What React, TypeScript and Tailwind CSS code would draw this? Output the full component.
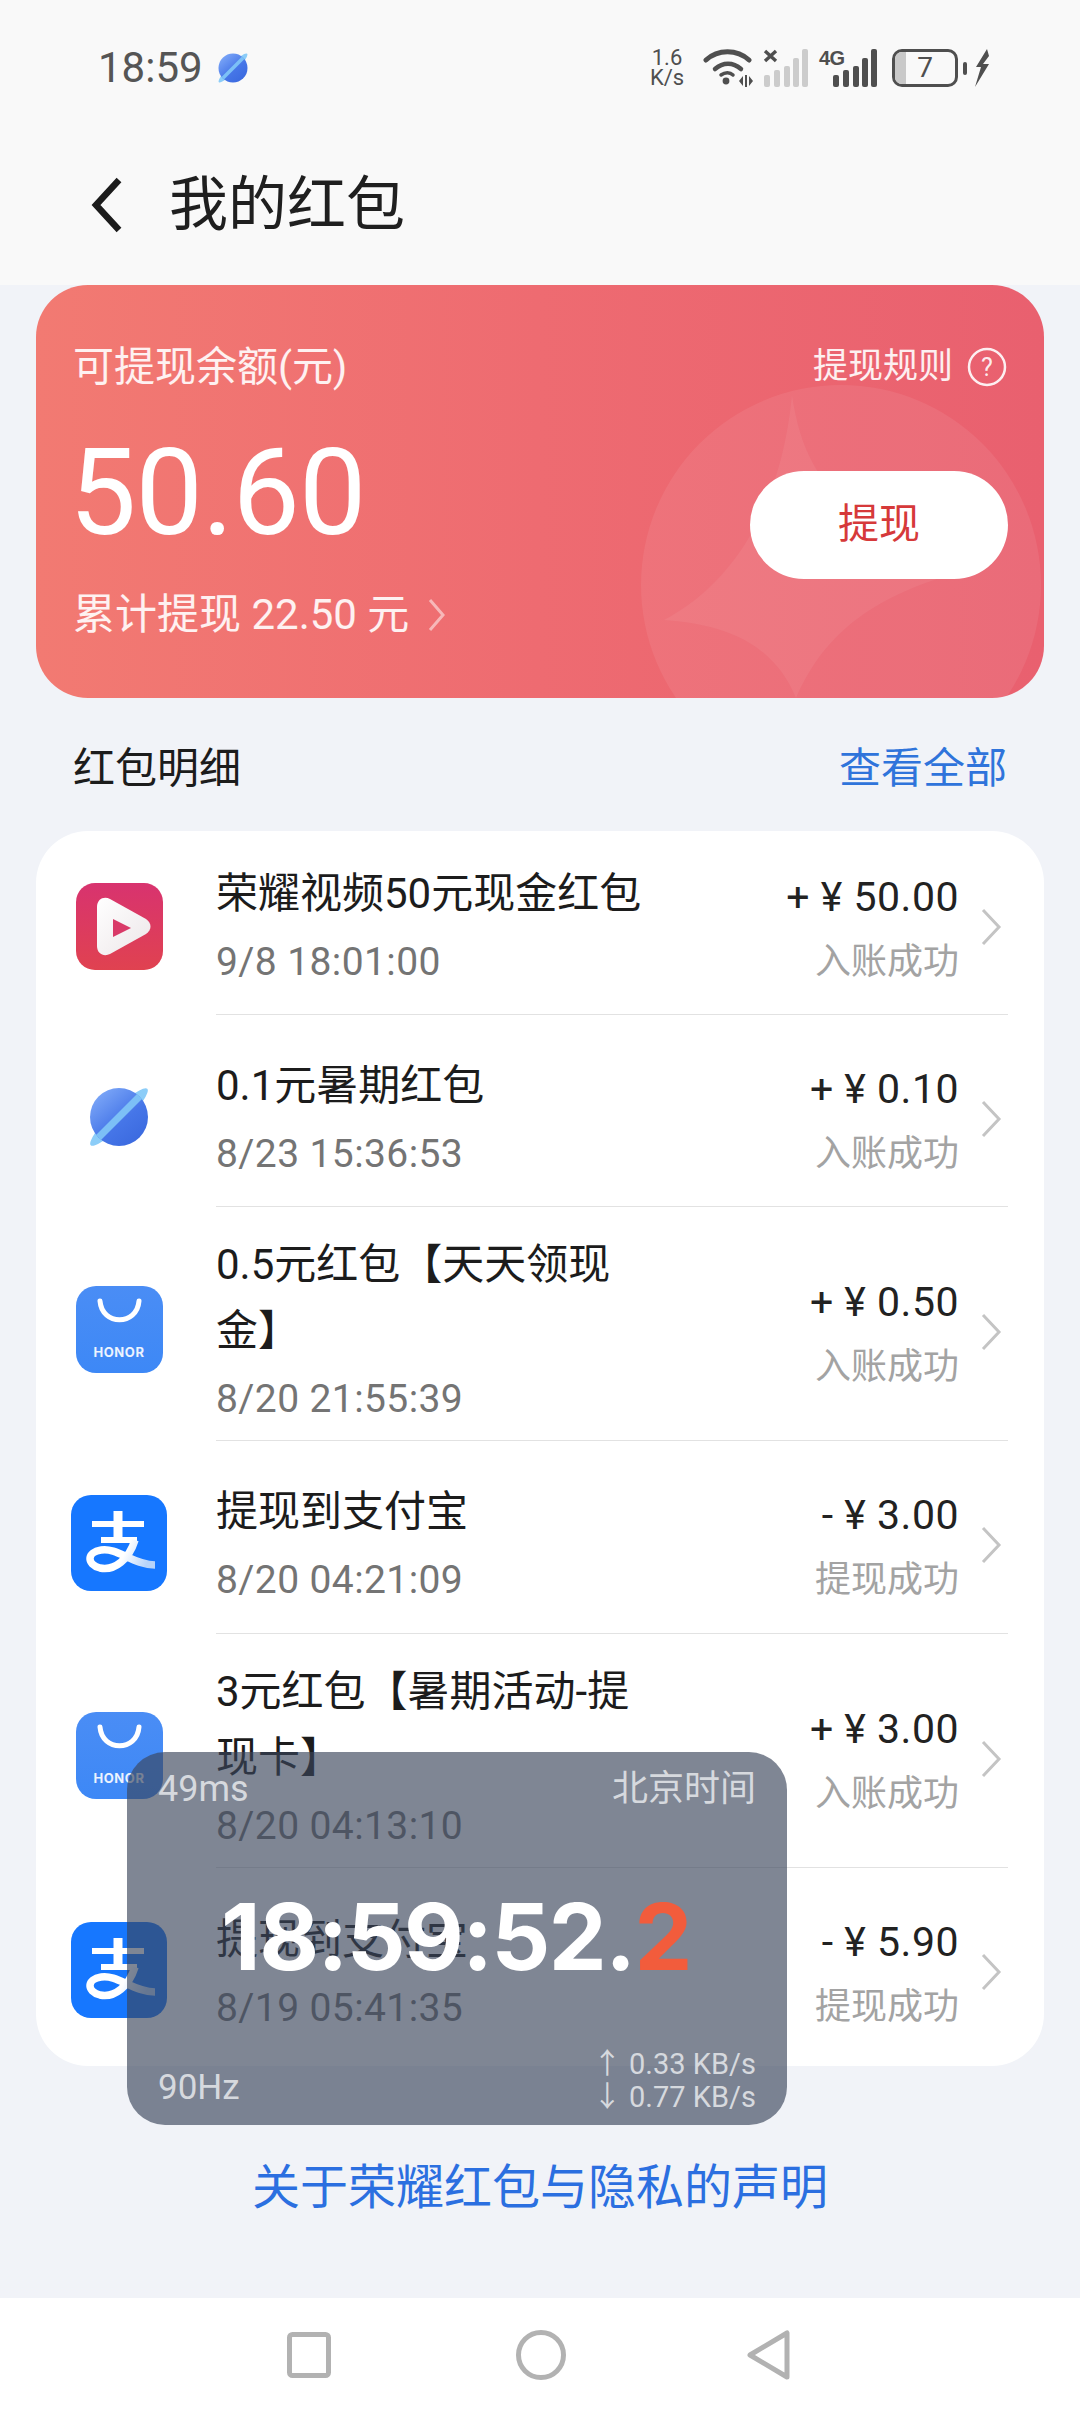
import React from "react";

const CJK = "font-['Roboto','Noto_Sans_CJK_SC',sans-serif]";

function Planet({ size = 64 }: { size?: number }) {
  return (
    <svg width={size} height={size} viewBox="0 0 64 64">
      <defs>
        <linearGradient id="pl" x1="0.15" y1="0.1" x2="0.8" y2="0.9">
          <stop offset="0" stopColor="#7aa5f7" />
          <stop offset="0.6" stopColor="#4676e8" />
          <stop offset="1" stopColor="#3c6be0" />
        </linearGradient>
      </defs>
      <ellipse cx="32" cy="32" rx="40" ry="8" transform="rotate(-45 32 32)" fill="#8ccdf8" />
      <circle cx="32" cy="32" r="29" fill="url(#pl)" />
      <path d="M9 50 L50 9 L55 14 L14 55Z" fill="#7cc0f6" />
    </svg>
  );
}

function PlayIcon() {
  return (
    <svg width="87" height="87" viewBox="0 0 87 87">
      <defs>
        <linearGradient id="pg" x1="0.5" y1="0" x2="0.5" y2="1">
          <stop offset="0" stopColor="#d8336f" />
          <stop offset="1" stopColor="#e04250" />
        </linearGradient>
        <linearGradient id="pw" x1="0" y1="0" x2="1" y2="1">
          <stop offset="0" stopColor="#ffffff" />
          <stop offset="1" stopColor="#ece6e8" />
        </linearGradient>
      </defs>
      <rect width="87" height="87" rx="19" fill="url(#pg)" />
      <path d="M21 24 C21 16 28 13 34 16 L70 36 C76 40 76 47 70 51 L34 71 C28 74 21 71 21 63Z" fill="url(#pw)" />
      <path d="M37 36 L55 45 L37 54Z" fill="#d93a68" />
    </svg>
  );
}

function HonorIcon() {
  return (
    <div className="relative w-[87px] h-[87px] rounded-[20px] bg-gradient-to-b from-[#4a8df5] to-[#3d88f6]">
      <svg className="absolute left-0 top-0" width="87" height="87" viewBox="0 0 87 87">
        <path d="M24 15 C26 40 61 40 63 15" fill="none" stroke="#ffffff" strokeWidth="5" strokeLinecap="round" />
      </svg>
      <div className="absolute left-0 right-0 top-[59px] text-center text-[13px] leading-[14px] font-bold tracking-[0.6px] text-white/90 font-['Inter',sans-serif]">HONOR</div>
    </div>
  );
}

function AlipayIcon() {
  return (
    <svg width="96" height="96" viewBox="0 0 96 96">
      <defs>
        <linearGradient id="ap" x1="0" y1="0" x2="1" y2="0.2">
          <stop offset="0" stopColor="#ffffff" />
          <stop offset="0.6" stopColor="#ffffff" />
          <stop offset="1" stopColor="#b7d4fa" />
        </linearGradient>
      </defs>
      <rect width="96" height="96" rx="20" fill="#1677ff" />
      <path d="M21 29 H73" stroke="#fff" strokeWidth="6" />
      <path d="M30 45 H66" stroke="#fff" strokeWidth="6" />
      <path d="M47 16 V45" stroke="#fff" strokeWidth="9" />
      <path d="M64 45 C58 64 44 76 29 73 C15 69 16 57 30 55 C46 52 62 70 84 70" fill="none" stroke="url(#ap)" strokeWidth="7.5" />
    </svg>
  );
}

function StatusIcons() {
  return (
    <div className="flex items-center h-[40px]">
      <div className={`w-[38px] text-center text-[#4f4f4f] text-[22px] leading-[20px] ${CJK}`}>
        <div>1.6</div>
        <div>K/s</div>
      </div>
      <svg className="ml-[17px]" width="50" height="40" viewBox="0 0 50 40" fill="none">
        <path d="M3 12 C15 1 34 1 46 12" stroke="#4f4f4f" strokeWidth="5" strokeLinecap="round" />
        <path d="M12 21 C20 14 30 14 38 21" stroke="#4f4f4f" strokeWidth="4.5" strokeLinecap="round" />
        <path d="M18 27 C22 24 27 24 30 27" stroke="#4f4f4f" strokeWidth="3.5" strokeLinecap="round" />
        <circle cx="23" cy="33" r="3.4" fill="#4f4f4f" />
        <path d="M36 33 L40 28 V38Z M42 27 H44 V39 H42Z M46 28 L50 33 L46 38Z" fill="#4f4f4f" />
      </svg>
      <svg className="ml-[10px]" width="46" height="40" viewBox="0 0 46 40">
        <path d="M2 3 L13 13 M13 3 L2 13" stroke="#4f4f4f" strokeWidth="3.4" />
        <rect x="1" y="27" width="6" height="12" rx="2" fill="#cccccc" />
        <rect x="11" y="22" width="6" height="17" rx="2" fill="#cccccc" />
        <rect x="21" y="18" width="6" height="21" rx="2" fill="#cccccc" />
        <rect x="30" y="10" width="6" height="29" rx="2" fill="#cccccc" />
        <rect x="39" y="1" width="6" height="38" rx="2" fill="#cccccc" />
      </svg>
      <div className="relative ml-[10px] w-[58px] h-[40px]">
        <span className="absolute left-0 top-[0px] text-[20px] leading-[20px] font-bold text-[#4f4f4f] font-['Liberation_Sans',sans-serif] tracking-[-0.5px]">4G</span>
        <svg className="absolute left-0 top-0" width="58" height="40" viewBox="0 0 58 40">
          <rect x="14" y="27" width="6" height="12" rx="2" fill="#4f4f4f" />
          <rect x="24" y="22" width="6" height="17" rx="2" fill="#4f4f4f" />
          <rect x="34" y="18" width="6" height="21" rx="2" fill="#4f4f4f" />
          <rect x="43" y="10" width="6" height="29" rx="2" fill="#4f4f4f" />
          <rect x="52" y="1" width="6" height="38" rx="2" fill="#4f4f4f" />
        </svg>
      </div>
      <div className="relative ml-[15px] w-[66px] h-[38px] rounded-[10px] border-[3px] border-[#4f4f4f] overflow-hidden flex items-center justify-center">
        <div className="absolute left-0 top-0 bottom-0 w-[11px] bg-[#c9c9c9]" />
        <span className={`text-[#4f4f4f] text-[28px] leading-[30px] ${CJK}`}>7</span>
      </div>
      <div className="ml-[5px] w-[4px] h-[13px] rounded-[2px] bg-[#4f4f4f]" />
      <svg className="ml-[7px]" width="16" height="38" viewBox="0 0 16 38">
        <path d="M13 0 L2 18 H7 L1 38 L15 15 H9 L15 7Z" fill="#4f4f4f" />
      </svg>
    </div>
  );
}

type Row = {
  h: string;
  pt: string;
  ip: string;
  rp: string;
  icon: React.ReactNode;
  title: React.ReactNode;
  date: string;
  sign: string;
  amount: string;
  status: string;
  last?: boolean;
};

const rows: Row[] = [
  { h: "h-[184px]", pt: "pt-[30px]", ip: "pt-[6px]", rp: "pt-[8px]", icon: <PlayIcon />, title: "荣耀视频50元现金红包", date: "9/8 18:01:00", sign: "+", amount: "50.00", status: "入账成功" },
  { h: "h-[192px]", pt: "pt-[38px]", ip: "pt-[12px]", rp: "pt-[16px]", icon: <Planet />, title: "0.1元暑期红包", date: "8/23 15:36:53", sign: "+", amount: "0.10", status: "入账成功" },
  { h: "h-[234px]", pt: "pt-[25px]", ip: "pt-[10px]", rp: "pt-[16px]", icon: <HonorIcon />, title: <>0.5元红包【天天领现<br />金】</>, date: "8/20 21:55:39", sign: "+", amount: "0.50", status: "入账成功" },
  { h: "h-[193px]", pt: "pt-[38px]", ip: "pt-[10px]", rp: "pt-[16px]", icon: <AlipayIcon />, title: "提现到支付宝", date: "8/20 04:21:09", sign: "-", amount: "3.00", status: "提现成功" },
  { h: "h-[234px]", pt: "pt-[25px]", ip: "pt-[8px]", rp: "pt-[16px]", icon: <HonorIcon />, title: <>3元红包【暑期活动-提<br />现卡】</>, date: "8/20 04:13:10", sign: "+", amount: "3.00", status: "入账成功" },
  { h: "h-[198px]", pt: "pt-[39px]", ip: "pt-[6px]", rp: "pt-[9px]", icon: <AlipayIcon />, title: "提现到支付宝", date: "8/19 05:41:35", sign: "-", amount: "5.90", status: "提现成功", last: true },
];

function ListRow({ r }: { r: Row }) {
  return (
    <div className={`flex ${r.h}`}>
      <div className={`w-[166px] mr-[14px] flex items-center justify-center shrink-0 ${r.ip}`}>{r.icon}</div>
      <div className={`flex-1 mr-[36px] flex ${r.last ? "" : "border-b border-[#e2e2e2]"}`}>
        <div className={`flex-1 ${r.pt}`}>
          <div className="text-[42px] leading-[66px] text-[#1c1c1c]">{r.title}</div>
          <div className="mt-[10px] text-[39px] leading-[50px] tracking-[0.4px] text-[#747474]">{r.date}</div>
        </div>
        <div className={`flex flex-col items-end justify-center w-[220px] ${r.rp}`}>
          <div className="text-[41px] leading-[56px] text-[#222222] tracking-[0.5px] whitespace-nowrap">
            {r.sign} ¥ {r.amount}
          </div>
          <div className="mt-[14px] text-[36px] leading-[46px] text-[#a3a3a3]">{r.status}</div>
        </div>
        <div className={`w-[49px] flex items-center justify-end pr-[6px] ${r.rp}`}>
          <svg width="22" height="40" viewBox="0 0 22 40" fill="none">
            <path d="M3 3 L19 20 L3 37" stroke="#c4c4c4" strokeWidth="3" />
          </svg>
        </div>
      </div>
    </div>
  );
}

export default function App() {
  return (
    <div className={`relative w-[1080px] h-[2412px] overflow-hidden flex flex-col bg-[#f1f3f8] ${CJK}`}>
      <header className="h-[285px] shrink-0 bg-[#f9f9f9]">
        <div className="h-[136px] pl-[98px] pr-[90px] flex items-center justify-between">
          <div className="flex items-center">
            <span className="text-[42px] leading-[44px] text-[#555555]">18:59</span>
            <span className="ml-[14px] flex"><Planet size={32} /></span>
          </div>
          <StatusIcons />
        </div>
        <div className="flex items-center h-[138px] pl-[90px]">
          <svg width="34" height="56" viewBox="0 0 34 56" fill="none">
            <path d="M29 3 L6 28 L29 53" stroke="#1c1c1c" strokeWidth="6.5" />
          </svg>
          <h1 className="ml-[45px] text-[59px] leading-[80px] font-normal text-[#1f1f1f]">我的红包</h1>
        </div>
      </header>

      <main className="flex-1 flex flex-col px-[36px]">
        <section className="relative h-[413px] rounded-[52px] overflow-hidden bg-gradient-to-r from-[#f27a72] via-[#ee6b71] to-[#e9606f] px-[37px] text-white">
          <svg className="absolute left-[600px] top-[95px]" width="408" height="318" viewBox="0 0 408 318">
            <circle cx="205" cy="205" r="200" fill="#ffffff" fillOpacity="0.07" />
            <path d="M156 15 C170 110 215 140 330 190 C240 215 190 250 160 318 C140 270 100 245 28 240 C95 205 145 130 156 15Z" fill="#ffffff" fillOpacity="0.06" />
          </svg>
          <div className="relative flex justify-between items-center pt-[54px]">
            <span className="text-[41px] leading-[56px] text-white/90">可提现余额(元)</span>
            <span className="flex items-center text-[35px] leading-[56px] text-white/90">
              提现规则
              <svg className="ml-[14px]" width="40" height="40" viewBox="0 0 40 40" fill="none">
                <circle cx="20" cy="20" r="18" stroke="#ffffff" strokeOpacity="0.9" strokeWidth="2.5" />
                <text x="20" y="29" textAnchor="middle" fontSize="25" fill="#ffffff" fillOpacity="0.9">?</text>
              </svg>
            </span>
          </div>
          <div className="relative mt-[40px] -ml-[4px] text-[120px] leading-[116px] tracking-[-1px] font-normal">50.60</div>
          <div className="relative mt-[36px] flex items-center text-[42px] leading-[56px] text-white/90">
            累计提现 22.50 元
            <svg className="ml-[18px]" width="20" height="36" viewBox="0 0 20 36" fill="none">
              <path d="M3 3 L16 18 L3 33" stroke="#ffffff" strokeOpacity="0.5" strokeWidth="3" />
            </svg>
          </div>
          <button className="absolute left-[714px] top-[186px] w-[258px] h-[108px] rounded-full bg-white text-[41px] text-[#d6393a]">提现</button>
        </section>

        <div className="mt-[37px] h-[66px] px-[37px] flex items-center justify-between text-[42px]">
          <span className="text-[#1c1c1c]">红包明细</span>
          <span className="text-[#2f74db]">查看全部</span>
        </div>

        <section className="mt-[30px] h-[1235px] rounded-[52px] bg-white">
          {rows.map((r, i) => (
            <ListRow key={i} r={r} />
          ))}
        </section>

        <div className="mt-[92px] text-center text-[48px] leading-[60px] text-[#2b6fe0]">关于荣耀红包与隐私的声明</div>
      </main>

      <nav className="h-[114px] shrink-0 bg-white flex items-center">
        <svg className="ml-[287px]" width="44" height="46" viewBox="0 0 44 46" fill="none">
          <rect x="2.5" y="2.5" width="39" height="41" rx="3" stroke="#b2b2b2" strokeWidth="5" />
        </svg>
        <svg className="ml-[185px]" width="50" height="50" viewBox="0 0 50 50" fill="none">
          <circle cx="25" cy="25" r="22.5" stroke="#b2b2b2" strokeWidth="5" />
        </svg>
        <svg className="ml-[181px]" width="44" height="50" viewBox="0 0 44 50" fill="none">
          <path d="M40 3 V47 L3 25Z" stroke="#b2b2b2" strokeWidth="5" strokeLinejoin="round" />
        </svg>
      </nav>

      <aside className="absolute left-[127px] top-[1752px] w-[660px] h-[373px] rounded-[38px] bg-[#3a455a]/65 text-[#d6d9de]">
        <div className="flex justify-between items-center px-[31px] pt-[14px] text-[36px] leading-[46px]">
          <span>49ms</span>
          <span>北京时间</span>
        </div>
        <div className="absolute left-[94px] top-[139px] font-['Inter',sans-serif] font-bold text-[92px] leading-[92px] text-white whitespace-nowrap tracking-[-1.5px]">
          18:59:52.<span className="text-[#f25c3c]">2</span>
        </div>
        <div className="absolute left-[31px] right-[31px] bottom-[11px] flex justify-between items-end">
          <span className="text-[35px] leading-[46px] pb-[3px]">90Hz</span>
          <div className="text-[29px] leading-[33px] text-right">
            <div>↑ 0.33 KB/s</div>
            <div>↓ 0.77 KB/s</div>
          </div>
        </div>
      </aside>
    </div>
  );
}
